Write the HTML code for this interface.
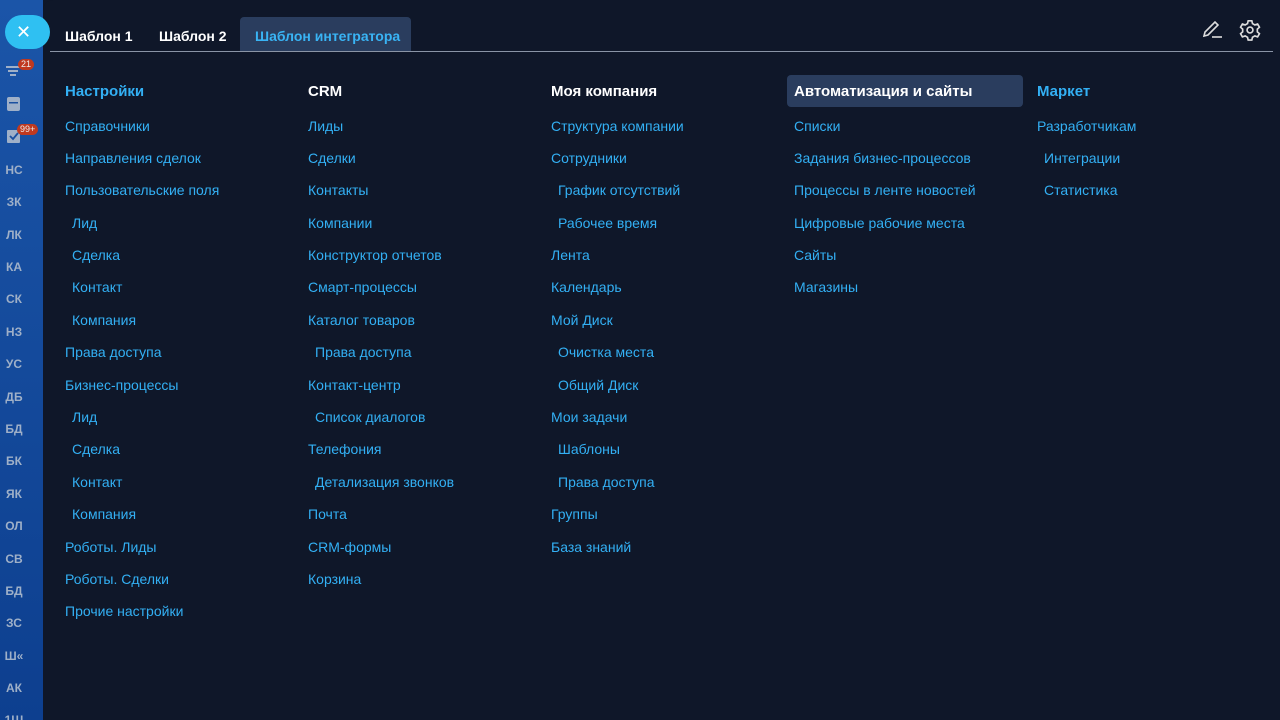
<!DOCTYPE html>
<html><head><meta charset="utf-8"><style>
*{margin:0;padding:0;box-sizing:border-box}
html,body{width:1280px;height:720px;overflow:hidden}
body{background:#0f1729;font-family:"Liberation Sans","DejaVu Sans",sans-serif;position:relative}
.side{position:absolute;left:0;top:0;width:43px;height:720px;background:linear-gradient(#1b55a8,#0d3f8f)}
.close{position:absolute;left:5px;top:15px;width:45px;height:34px;border-radius:17px;background:#2fc0f2;color:#fff;font-size:18px;line-height:34px;padding-left:11px;z-index:1}
.sl{position:absolute;left:0;width:28px;text-align:center;color:#9fb0c8;font-size:12px;font-weight:bold}
.badge{position:absolute;background:#c0391f;color:#eee;font-size:9px;border-radius:6px;padding:0 3px;height:11px;line-height:11px}
.panel{position:absolute;left:43px;top:0;width:1237px;height:720px;background:#0f1729;border-radius:10px 0 0 0}
.tab{position:absolute;top:17px;height:35px;line-height:38px;font-size:14px;font-weight:bold;color:#fff}
.tabs-line{position:absolute;left:50px;top:51px;width:1223px;height:1px;background:#8a94a6}
.h{position:absolute;top:83px;font-size:15px;font-weight:bold;line-height:18px}
.i{position:absolute;font-size:14px;color:#33b0f4;line-height:17px;margin-top:1px}
</style></head><body>
<div class="side"></div>
<div class="panel"></div>
<div class="close">✕</div>
<svg style="position:absolute;left:6px;top:66px" width="14" height="12"><path d="M0 1h14M2 5h10M4 9h6" stroke="#9fb0c8" stroke-width="2"/></svg>
<div class="badge" style="left:18px;top:59px">21</div>
<svg style="position:absolute;left:7px;top:97px" width="13" height="14"><rect x="0" y="0" width="13" height="14" rx="2" fill="#9fb0c8"/><rect x="2" y="5" width="9" height="1.5" fill="#1b50a0"/></svg>
<svg style="position:absolute;left:7px;top:130px" width="13" height="13"><rect width="13" height="13" rx="1" fill="#9fb0c8"/><path d="M3 6l3 3 5-6" stroke="#1b50a0" stroke-width="1.8" fill="none"/></svg>
<div class="badge" style="left:17px;top:124px">99+</div>
<div class="sl" style="top:163px">НС</div><div class="sl" style="top:195px">ЗК</div><div class="sl" style="top:228px">ЛК</div><div class="sl" style="top:260px">КА</div><div class="sl" style="top:292px">СК</div><div class="sl" style="top:325px">НЗ</div><div class="sl" style="top:357px">УС</div><div class="sl" style="top:390px">ДБ</div><div class="sl" style="top:422px">БД</div><div class="sl" style="top:454px">БК</div><div class="sl" style="top:487px">ЯК</div><div class="sl" style="top:519px">ОЛ</div><div class="sl" style="top:552px">СВ</div><div class="sl" style="top:584px">БД</div><div class="sl" style="top:616px">ЗС</div><div class="sl" style="top:649px">Ш«</div><div class="sl" style="top:681px">АК</div><div class="sl" style="top:713px">1Ш</div>

<div class="tab" style="left:65px">Шаблон 1</div>
<div class="tab" style="left:159px">Шаблон 2</div>
<div class="tab" style="left:240px;width:171px;background:#2a3d5e;border-radius:4px 4px 0 0;color:#39b4f5;padding-left:15px">Шаблон интегратора</div>
<div class="tabs-line"></div>
<svg style="position:absolute;left:1201px;top:19px" width="22" height="20" fill="none" stroke="#ddd" stroke-width="1.6"><path d="M3 17l1-4L14 3l3 3L7 16z"/><path d="M11 18h10"/></svg>
<svg style="position:absolute;left:1239px;top:19px" width="22" height="22" viewBox="0 0 24 24" fill="none" stroke="#ddd" stroke-width="1.8"><circle cx="12" cy="12" r="3.2"/><path d="M10 2h4l.7 3 2.6 1.5 3-1 2 3.5-2.3 2v3l2.3 2-2 3.5-3-1-2.6 1.5-.7 3h-4l-.7-3-2.6-1.5-3 1-2-3.5 2.3-2v-3l-2.3-2 2-3.5 3 1L9.3 5z"/></svg>

<div class="h" style="left:65px;color:#33b0f4">Настройки</div>
<div class="h" style="left:308px;color:#fff">CRM</div>
<div class="h" style="left:551px;color:#fff">Моя компания</div>
<div style="position:absolute;left:787px;top:75px;width:236px;height:32px;background:#2a3d5e;border-radius:4px"></div>
<div class="h" style="left:794px;color:#fff">Автоматизация и сайты</div>
<div class="h" style="left:1037px;color:#33b0f4">Маркет</div>

<div class="i" style="left:65px;top:117px">Справочники</div>
<div class="i" style="left:65px;top:149px">Направления сделок</div>
<div class="i" style="left:65px;top:181px">Пользовательские поля</div>
<div class="i" style="left:72px;top:214px">Лид</div>
<div class="i" style="left:72px;top:246px">Сделка</div>
<div class="i" style="left:72px;top:278px">Контакт</div>
<div class="i" style="left:72px;top:311px">Компания</div>
<div class="i" style="left:65px;top:343px">Права доступа</div>
<div class="i" style="left:65px;top:376px">Бизнес-процессы</div>
<div class="i" style="left:72px;top:408px">Лид</div>
<div class="i" style="left:72px;top:440px">Сделка</div>
<div class="i" style="left:72px;top:473px">Контакт</div>
<div class="i" style="left:72px;top:505px">Компания</div>
<div class="i" style="left:65px;top:538px">Роботы. Лиды</div>
<div class="i" style="left:65px;top:570px">Роботы. Сделки</div>
<div class="i" style="left:65px;top:602px">Прочие настройки</div>

<div class="i" style="left:308px;top:117px">Лиды</div>
<div class="i" style="left:308px;top:149px">Сделки</div>
<div class="i" style="left:308px;top:181px">Контакты</div>
<div class="i" style="left:308px;top:214px">Компании</div>
<div class="i" style="left:308px;top:246px">Конструктор отчетов</div>
<div class="i" style="left:308px;top:278px">Смарт-процессы</div>
<div class="i" style="left:308px;top:311px">Каталог товаров</div>
<div class="i" style="left:315px;top:343px">Права доступа</div>
<div class="i" style="left:308px;top:376px">Контакт-центр</div>
<div class="i" style="left:315px;top:408px">Список диалогов</div>
<div class="i" style="left:308px;top:440px">Телефония</div>
<div class="i" style="left:315px;top:473px">Детализация звонков</div>
<div class="i" style="left:308px;top:505px">Почта</div>
<div class="i" style="left:308px;top:538px">CRM-формы</div>
<div class="i" style="left:308px;top:570px">Корзина</div>

<div class="i" style="left:551px;top:117px">Структура компании</div>
<div class="i" style="left:551px;top:149px">Сотрудники</div>
<div class="i" style="left:558px;top:181px">График отсутствий</div>
<div class="i" style="left:558px;top:214px">Рабочее время</div>
<div class="i" style="left:551px;top:246px">Лента</div>
<div class="i" style="left:551px;top:278px">Календарь</div>
<div class="i" style="left:551px;top:311px">Мой Диск</div>
<div class="i" style="left:558px;top:343px">Очистка места</div>
<div class="i" style="left:558px;top:376px">Общий Диск</div>
<div class="i" style="left:551px;top:408px">Мои задачи</div>
<div class="i" style="left:558px;top:440px">Шаблоны</div>
<div class="i" style="left:558px;top:473px">Права доступа</div>
<div class="i" style="left:551px;top:505px">Группы</div>
<div class="i" style="left:551px;top:538px">База знаний</div>

<div class="i" style="left:794px;top:117px">Списки</div>
<div class="i" style="left:794px;top:149px">Задания бизнес-процессов</div>
<div class="i" style="left:794px;top:181px">Процессы в ленте новостей</div>
<div class="i" style="left:794px;top:214px">Цифровые рабочие места</div>
<div class="i" style="left:794px;top:246px">Сайты</div>
<div class="i" style="left:794px;top:278px">Магазины</div>

<div class="i" style="left:1037px;top:117px">Разработчикам</div>
<div class="i" style="left:1044px;top:149px">Интеграции</div>
<div class="i" style="left:1044px;top:181px">Статистика</div>
</body></html>
